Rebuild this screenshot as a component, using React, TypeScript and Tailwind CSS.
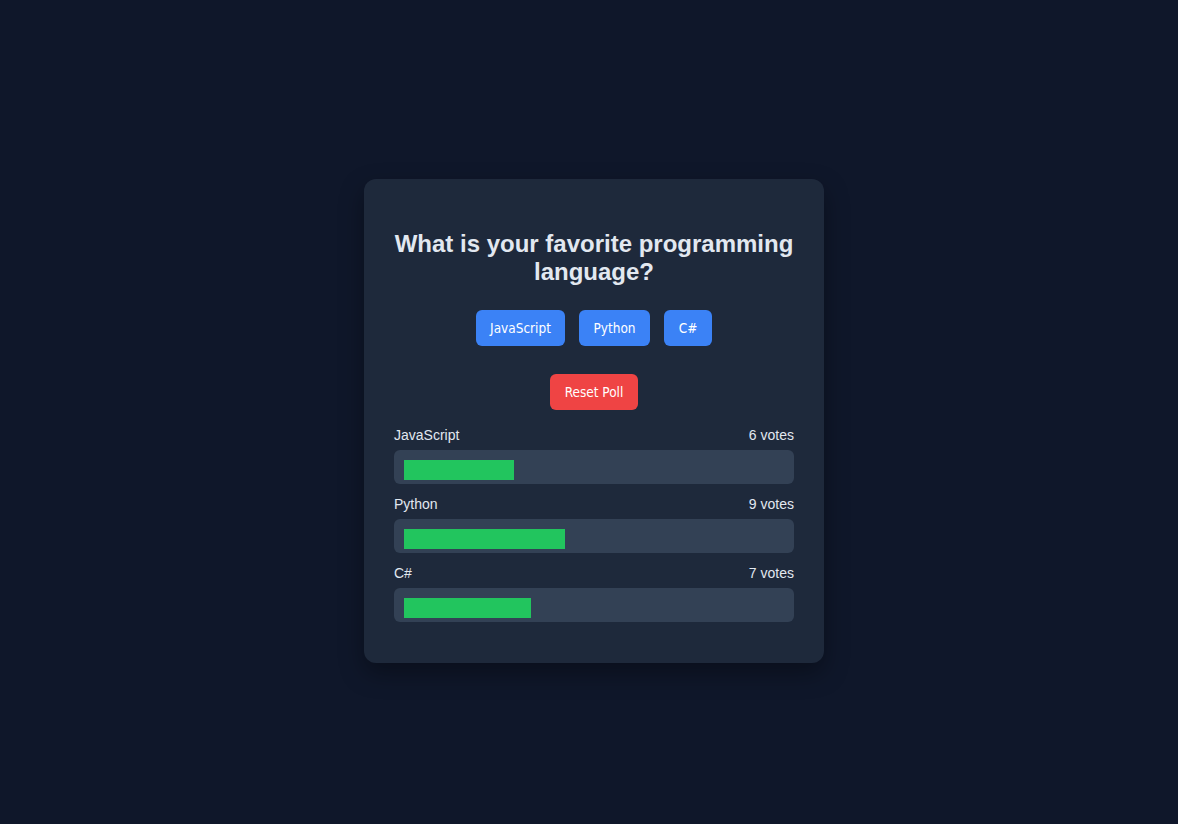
const options = [
  { name: "JavaScript", w: "w-[89px]" },
  { name: "Python", w: "w-[71px]" },
  { name: "C#", w: "w-[48px]" },
];

const results = [
  { name: "JavaScript", votes: 6, width: 110 },
  { name: "Python", votes: 9, width: 161 },
  { name: "C#", votes: 7, width: 127 },
];

const btnFont = { fontFamily: '"DejaVu Sans Condensed", Tahoma, "Liberation Sans", sans-serif' };

export default function App() {
  return (
    <main className="min-h-screen w-full bg-[#0f172a] flex justify-center pt-[179px] pl-[10px] font-['Liberation_Sans',Arial,sans-serif]">
      <div className="w-[460px] h-[484px] rounded-xl bg-[#1e293b] p-[30px] shadow-[0_10px_25px_rgba(0,0,0,0.35)]">
        <h2 className="mt-[21px] text-center text-[24px] leading-[28px] font-bold text-[#e2e8f0]">
          What is your favorite programming language?
        </h2>

        <div className="mt-[24px] flex justify-center gap-[14px]">
          {options.map((o) => (
            <button
              key={o.name}
              style={btnFont}
              className={`${o.w} h-[36px] rounded-md bg-[#3b82f6] text-white text-[13.5px]`}
            >
              {o.name}
            </button>
          ))}
        </div>

        <div className="mt-[28px] flex justify-center">
          <button
            style={btnFont}
            className="w-[88px] h-[36px] rounded-md bg-[#ef4444] text-white text-[13.5px]"
          >
            Reset Poll
          </button>
        </div>

        <div className="mt-[15px]">
          {results.map((r) => (
            <div key={r.name} className="mb-[10px]">
              <div className="flex justify-between text-sm text-[#e2e8f0] mb-[5px]">
                <span>{r.name}</span>
                <span>{r.votes} votes</span>
              </div>
              <div className="h-[34px] rounded-md bg-[#334155] p-[10px]">
                <div className="h-[20px] bg-[#22c55e]" style={{ width: r.width }} />
              </div>
            </div>
          ))}
        </div>
      </div>
    </main>
  );
}
